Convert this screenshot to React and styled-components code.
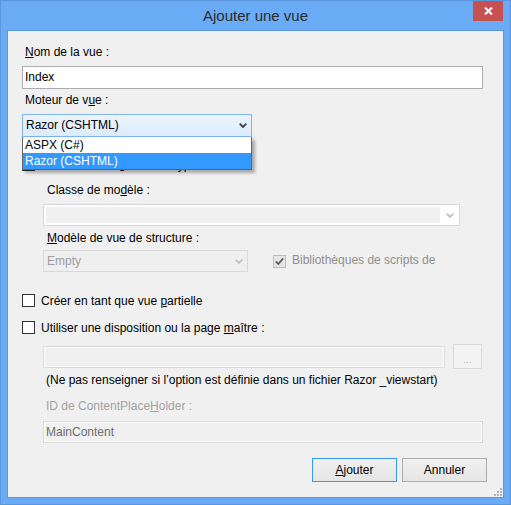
import styled, { createGlobalStyle } from 'styled-components'

const GlobalStyle = createGlobalStyle`
  html, body {
    margin: 0;
    padding: 0;
  }
  body {
    background: #ffffff;
    font-family: "Liberation Sans", Arial, sans-serif;
    font-size: 12px;
    color: #000;
  }
  * {
    box-sizing: border-box;
  }
`

// petite flèche des listes déroulantes
const Chevron = ({ color = '#444444' }) => (
  <svg width="8" height="5" viewBox="0 0 8 5">
    <path d="M0.7 0.7 L4 4 L7.3 0.7" fill="none" stroke={color} strokeWidth="1.9" />
  </svg>
)

const CheckMark = ({ color = '#5d5d5d' }) => (
  <svg width="11" height="11" viewBox="0 0 11 11">
    <path d="M1.8 5.4 L4.3 8 L9.2 2.4" fill="none" stroke={color} strokeWidth="1.8" />
  </svg>
)

const AddViewDialog = () => {
  return (
    <Window>
      <TitleBar>
        <Title>Ajouter une vue</Title>
        <CloseButton>
          <svg width="9" height="8" viewBox="0 0 9 8">
            <path d="M1 0.5 L8 7.5 M8 0.5 L1 7.5" stroke="#ffffff" strokeWidth="2" />
          </svg>
        </CloseButton>
      </TitleBar>

      <Client>
        <Label><u>N</u>om de la vue :</Label>
        <TextBox $top={6}>Index</TextBox>

        <Label $top={4}>Moteur de v<u>u</u>e :</Label>
        <ComboWrap $top={6} $w={230}>
          <Combo $open>
            <ComboText>Razor (CSHTML)</ComboText>
            <ArrowZone><Chevron /></ArrowZone>
          </Combo>
          <DropList>
            <DropItem>ASPX (C#)</DropItem>
            <DropItem $selected>Razor (CSHTML)</DropItem>
          </DropList>
        </ComboWrap>

        <CheckRow $top={20}>
          <Box />
          <span>Créer une vue <u>f</u>ortement typée</span>
        </CheckRow>

        <Indent>
          <Label $top={11} $pad={4}>Classe de mo<u>d</u>èle :</Label>
          <ComboWrap $top={6} $w={417}>
            <Combo $disabled $h={22}>
              <EditZone />
              <ArrowZone $w={19}><Chevron color="#c2c2c2" /></ArrowZone>
            </Combo>
          </ComboWrap>

          <Label $top={5} $pad={4}><u>M</u>odèle de vue de structure :</Label>
          <InlineRow $top={4}>
            <ComboWrap $w={205}>
              <Combo $disabled $flat $h={22}>
                <ComboText $disabled>Empty</ComboText>
                <ArrowZone><Chevron color="#c2c2c2" /></ArrowZone>
              </Combo>
            </ComboWrap>
            <CheckRow $left={25} $disabled>
              <Box $disabled><CheckMark /></Box>
              <CheckText $lift={2}>Bibliothèques de scripts de</CheckText>
            </CheckRow>
          </InlineRow>
        </Indent>

        <CheckRow $top={21}>
          <Box />
          <span>Créer en tant que vue <u>p</u>artielle</span>
        </CheckRow>
        <CheckRow $top={12}>
          <Box />
          <span>Utiliser une disposition ou la page <u>m</u>aître :</span>
        </CheckRow>

        <Indent>
          <InlineRow $top={9}>
            <TextBox $disabled $h={22} $w={402} />
            <BrowseButton disabled>...</BrowseButton>
          </InlineRow>
          <Label $top={4} $pad={3}>(Ne pas renseigner si l’option est définie dans un fichier Razor _viewstart)</Label>
          <Label $top={11} $pad={3} $disabled>ID de ContentPlace<u>H</u>older :</Label>
          <TextBox $top={7} $h={22} $disabled>MainContent</TextBox>
        </Indent>

        <ButtonRow>
          <Button $default><u>A</u>jouter</Button>
          <Button>Annuler</Button>
        </ButtonRow>

        <SizeGrip>
          <svg width="9" height="9" viewBox="0 0 9 9">
            <rect x="7" y="1" width="2" height="2" fill="#b3b3b3" />
            <rect x="4" y="4" width="2" height="2" fill="#b3b3b3" />
            <rect x="7" y="4" width="2" height="2" fill="#b3b3b3" />
            <rect x="1" y="7" width="2" height="2" fill="#b3b3b3" />
            <rect x="4" y="7" width="2" height="2" fill="#b3b3b3" />
            <rect x="7" y="7" width="2" height="2" fill="#b3b3b3" />
          </svg>
        </SizeGrip>
      </Client>
    </Window>
  )
}

// fenêtre
const Window = styled.div`
  width: 511px;
  height: 505px;
  display: flex;
  flex-direction: column;
  background: #6aabf5;
  border: 1px solid #5b96de;
`
const TitleBar = styled.div`
  height: 29px;
  display: grid;
  grid-template-columns: 1fr auto 1fr;
  align-items: start;
`
const Title = styled.div`
  grid-column: 2;
  font-size: 15px;
  line-height: 29px;
  color: #2b2b2b;
  white-space: nowrap;
`
const CloseButton = styled.div`
  grid-column: 3;
  justify-self: end;
  width: 30px;
  height: 20px;
  margin-right: 7px;
  background: #c75050;
  display: flex;
  align-items: center;
  justify-content: center;
`
const Client = styled.div`
  position: relative;
  flex: 1;
  margin: 0 6px 6px;
  border: 1px solid #5b96de;
  background: #f0f0f0;
  padding: 14px 20px 0 14px;
  display: flex;
  flex-direction: column;
`

// champs
const Label = styled.div`
  height: 15px;
  line-height: 15px;
  margin-top: ${p => p.$top ?? 0}px;
  padding-left: ${p => p.$pad ?? 3}px;
  color: ${p => (p.$disabled ? '#a3a3a3' : '#000')};
  white-space: nowrap;
`
const TextBox = styled.div`
  height: ${p => p.$h ?? 23}px;
  width: ${p => (p.$w ? `${p.$w}px` : 'auto')};
  flex-shrink: 0;
  margin-top: ${p => p.$top ?? 0}px;
  padding-left: 2px;
  line-height: ${p => (p.$h ?? 23) - 2}px;
  border: 1px solid ${p => (p.$disabled ? '#d9d9d9' : '#abadb3')};
  background: ${p => (p.$disabled ? '#f0f0f0' : '#ffffff')};
  box-shadow: ${p => (p.$disabled ? 'inset 0 0 0 1px #ffffff' : 'none')};
  color: ${p => (p.$disabled ? '#6d6d6d' : '#000')};
`
const ComboWrap = styled.div`
  position: relative;
  width: ${p => p.$w}px;
  flex-shrink: 0;
  margin-top: ${p => p.$top ?? 0}px;
`
const Combo = styled.div`
  height: ${p => p.$h ?? 23}px;
  display: flex;
  align-items: stretch;
  border: 1px solid ${p => (p.$open ? '#7eb4ea' : '#d9d9d9')};
  background: ${p =>
    p.$open
      ? 'linear-gradient(#ecf4fc, #dcecfc)'
      : p.$flat
      ? '#efefef'
      : '#ffffff'};
`
const ComboText = styled.div`
  flex: 1;
  padding-left: 3px;
  line-height: ${p => (p.$disabled ? 20 : 21)}px;
  color: ${p => (p.$disabled ? '#9d9d9d' : '#000')};
`
const EditZone = styled.div`
  flex: 1;
  margin: 2px 0 2px 2px;
  background: #f0f0f0;
`
const ArrowZone = styled.div`
  width: ${p => p.$w ?? 17}px;
  display: flex;
  align-items: center;
  justify-content: center;
`
const DropList = styled.div`
  position: absolute;
  top: 100%;
  left: 0;
  width: 100%;
  z-index: 2;
  background: #ffffff;
  border: 1px solid #646464;
  border-top: none;
  box-shadow: 3px 3px 3px rgba(0, 0, 0, 0.3);
`
const DropItem = styled.div`
  height: 16px;
  line-height: 16px;
  padding-left: 2px;
  background: ${p => (p.$selected ? '#3399ff' : '#ffffff')};
  color: ${p => (p.$selected ? '#ffffff' : '#000')};
`

// cases à cocher
const CheckRow = styled.div`
  display: flex;
  align-items: center;
  gap: 6px;
  height: 15px;
  margin-top: ${p => p.$top ?? 0}px;
  margin-left: ${p => p.$left ?? 0}px;
  color: ${p => (p.$disabled ? '#8e8e8e' : '#000')};
  white-space: nowrap;
`
const CheckText = styled.span`
  margin-top: ${p => -(p.$lift ?? 0)}px;
`
const Box = styled.span`
  width: 13px;
  height: 13px;
  flex-shrink: 0;
  display: flex;
  align-items: center;
  justify-content: center;
  border: 1px solid ${p => (p.$disabled ? '#bcbcbc' : '#333333')};
  background: ${p => (p.$disabled ? '#e6e6e6' : '#ffffff')};
`

const Indent = styled.div`
  display: flex;
  flex-direction: column;
  padding-left: 21px;
`
const InlineRow = styled.div`
  display: flex;
  align-items: center;
  margin-top: ${p => p.$top ?? 0}px;
`
const BrowseButton = styled.button`
  width: 29px;
  height: 25px;
  margin-left: 8px;
  padding: 0 0 3px;
  font: inherit;
  font-size: 10px;
  color: #b8b8b8;
  border: 1px solid #d9d9d9;
  background: #f4f4f4;
  display: flex;
  align-items: flex-end;
  justify-content: center;
`

// boutons du bas
const ButtonRow = styled.div`
  display: flex;
  justify-content: flex-end;
  gap: 5px;
  margin-top: 15px;
  margin-right: -4px;
`
const Button = styled.button`
  width: 85px;
  height: 24px;
  padding: 0;
  font: inherit;
  color: #000;
  border: 1px solid ${p => (p.$default ? '#3399ff' : '#acacac')};
  background: linear-gradient(#f0f0f0, #e5e5e5);
`
const SizeGrip = styled.div`
  position: absolute;
  right: 1px;
  bottom: 1px;
  width: 9px;
  height: 9px;
  display: flex;
`

export default function App() {
  return (
    <>
      <GlobalStyle />
      <AddViewDialog />
    </>
  )
}
